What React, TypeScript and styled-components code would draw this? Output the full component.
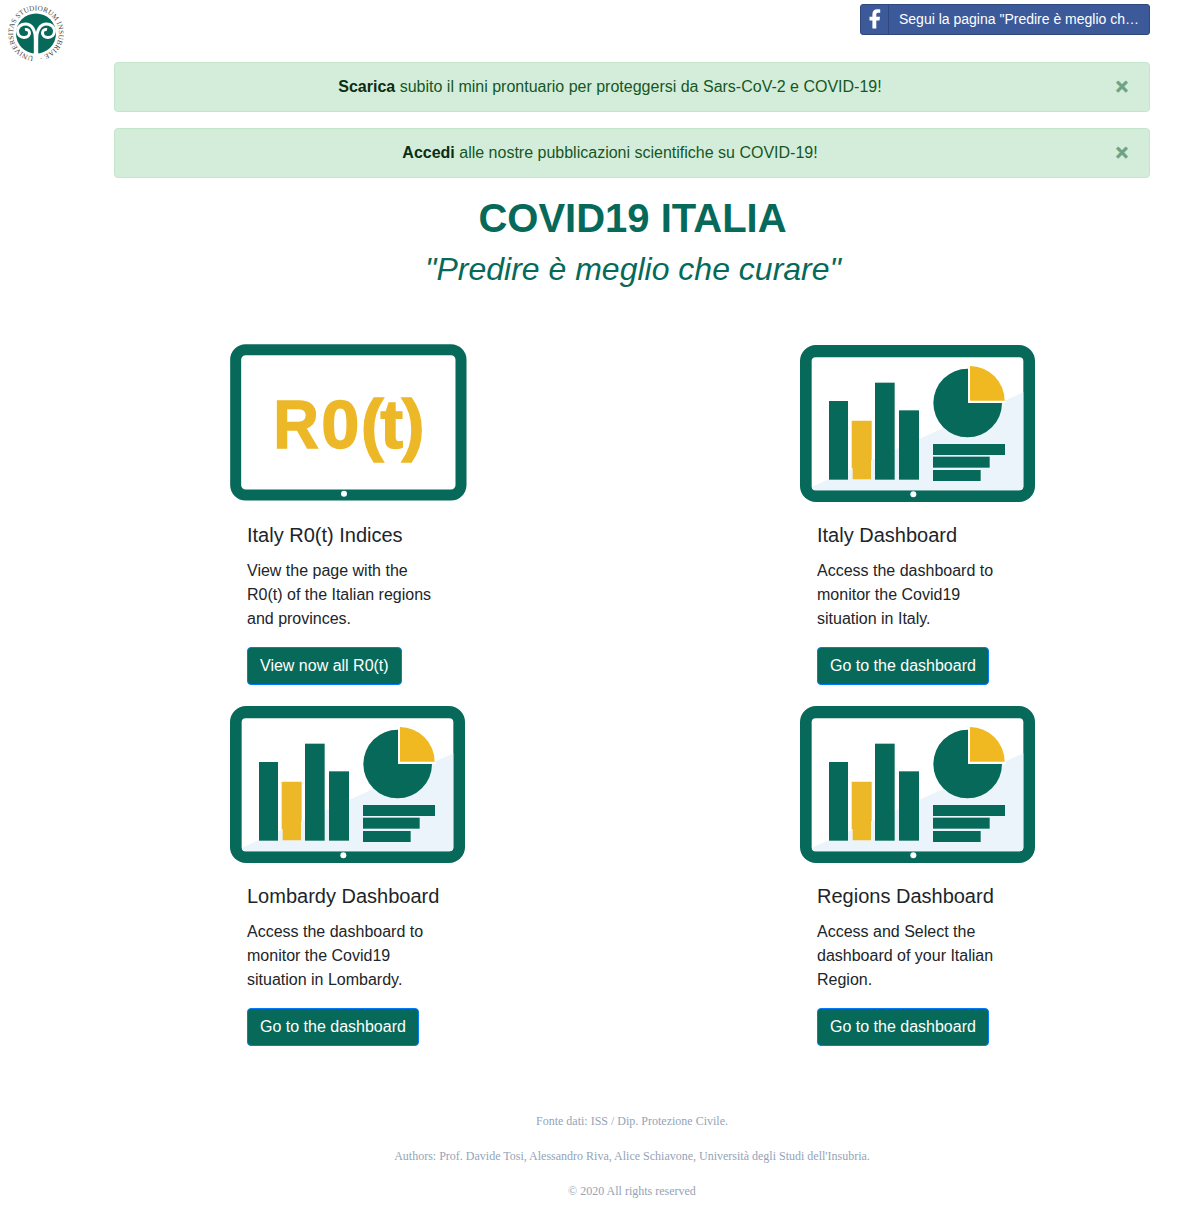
import React from "react";
import styled, { createGlobalStyle } from "styled-components";

const GREEN = "#076959";
const YELLOW = "#edb828";

const GlobalStyle = createGlobalStyle`
  *, *::before, *::after { box-sizing: border-box; }
  body {
    margin: 0;
    background: #fff;
    color: #212529;
    font: 400 16px/1.5 "Liberation Sans", Arial, sans-serif;
  }
`;

const Page = styled.div`
  display: flex;
  min-height: 1214px;
  padding: 4px 29px 0 8px;
`;
const Side = styled.aside`
  flex: 0 0 106px;
`;
const Main = styled.main`
  flex: 1;
`;
const Header = styled.header`
  display: flex;
  justify-content: flex-end;
  height: 58px;
`;
const FollowButton = styled.a`
  display: flex;
  width: 290px;
  height: 31px;
  border: 1px solid #2f477a;
  border-radius: 3px;
  background: #3c5a99;
  color: #fff;
  font-size: 14px;
  line-height: 28px;
`;
const FollowIcon = styled.span`
  display: flex;
  width: 28px;
  border-right: 1px solid #2f477a;
`;
const FollowLabel = styled.span`
  flex: 1;
  padding-left: 10px;
  white-space: nowrap;
`;
const Alert = styled.div`
  display: flex;
  justify-content: space-between;
  height: 50px;
  margin-bottom: 16px;
  padding: 12px 20px;
  border: 1px solid #c3e6cb;
  border-radius: 4px;
  background: #d4edda;
  color: #155724;
`;
const AlertText = styled.p`
  flex: 1;
  margin: 0;
  padding-right: 30px;
  text-align: center;
  b { color: #0b2e13; }
`;
const Close = styled.button`
  width: 14px;
  padding: 0;
  border: 0;
  background: none;
  color: #155724;
  font: 700 22px/22px "Liberation Sans", Arial, sans-serif;
  -webkit-text-stroke: 0.7px #155724;
  opacity: 0.5;
`;
const Title = styled.h1`
  margin: 0 0 8px;
  padding-left: 1px;
  color: ${GREEN};
  font-size: 40px;
  line-height: 48px;
  text-align: center;
`;
const Subtitle = styled.h2`
  margin: 0;
  padding-left: 2px;
  color: ${GREEN};
  font-size: 32px;
  font-weight: 400;
  font-style: italic;
  line-height: 38px;
  text-align: center;
`;
const Cards = styled.section`
  display: grid;
  grid-template-columns: 240px 240px;
  column-gap: 330px;
  margin: 56px 0 0 113px;
`;
const Card = styled.article`
  height: 361px;
`;
const CardBody = styled.div`
  padding: 20px;
`;
const CardTitle = styled.h5`
  margin: 0 0 12px;
  font-size: 20px;
  font-weight: 400;
  line-height: 24px;
`;
const CardText = styled.p`
  margin: 0 0 16px;
`;
const CardButton = styled.a`
  display: inline-block;
  height: 38px;
  padding: 6px 12px;
  border: 1px solid #007bff;
  border-radius: 4px;
  background: ${GREEN};
  color: #fff;
`;
const Picture = styled.svg`
  display: block;
  width: 240px;
  height: 159px;
`;
const Footer = styled.footer`
  margin-top: 46px;
  color: #94a3b8;
  font: 12px/18px "Liberation Serif", "Times New Roman", serif;
  text-align: center;
  p { margin: 0 0 17px; }
`;

const Logo = () => (
  <svg width="56" height="58" viewBox="-28 -29.500 56 58">
    <circle r="20" fill={GREEN} />
    <g fill="none" stroke="#fff" strokeWidth="3">
      <path d="M-0.700 21V6C-0.500-3-4-9.500-10.500-9.500C-15-9.500-18.500-6.500-18.500-2.500C-18.500 1.500-15.500 4-12 4C-8.500 4-6.500 2-6.500-0.500C-6.500-3-8.500-4.500-11-4" />
      <path d="M0.700 21V6C0.500-3 4-9.500 10.500-9.500C15-9.500 18.500-6.500 18.500-2.500C18.500 1.500 15.500 4 12 4C8.500 4 6.500 2 6.500-0.500C6.500-3 8.500-4.500 11-4" />
    </g>
    <defs>
      <path id="seal-ring" d="M-2.500 22.800A23 23 0 1 1 2.500 22.800" />
    </defs>
    <text fill="#444" fontSize="7.2" fontFamily="Liberation Serif, serif">
      <textPath href="#seal-ring" textLength="138">UNIVERSITAS STUDIORUM INSUBRIAE ·</textPath>
    </text>
  </svg>
);

const FacebookMark = () => (
  <svg width="27" height="29" viewBox="0 0 27 29">
    <path
      fill="#fff"
      d="M11.400 23.500V15.500H8.500V11.800H11.400V9.300C11.400 5.800 13.300 4.200 16.300 4.200C17.700 4.200 18.700 4.300 19.200 4.400V7.700H17.200C15.600 7.700 15.300 8.500 15.300 9.600V11.800H19L18.500 15.500H15.300V23.500Z"
    />
  </svg>
);

const IndexPicture = () => (
  <Picture viewBox="21 27 720 477">
    <rect x="47" y="44" width="676" height="436" rx="30" fill="none" stroke={GREEN} strokeWidth="33" />
    <circle cx="372" cy="476" r="9" fill="#fff" />
    <g
      fill={YELLOW}
      stroke={YELLOW}
      strokeWidth="4"
      fontFamily="Liberation Sans, Arial, sans-serif"
      fontWeight="700"
      fontSize="206"
    >
      <text x="160" y="340" textLength="137" lengthAdjust="spacingAndGlyphs">R</text>
      <text x="304 422 481 545" y="339">0(t)</text>
    </g>
  </Picture>
);

const DashboardPicture = () => (
  <Picture viewBox="21 27 720 477">
    <rect x="30" y="30" width="705" height="471" rx="48" fill={GREEN} />
    <rect x="65" y="67" width="635" height="399" rx="12" fill="#fff" />
    <path d="M66 455L700 172V454Q700 466 688 466H77Q66 466 66 455Z" fill="#eaf4fa" />
    <g fill={GREEN}>
      <rect x="117" y="198" width="57" height="236" />
      <rect x="255" y="143" width="59" height="291" />
      <rect x="327" y="226" width="60" height="208" />
      <path d="M534 101A103 103 0 1 0 636 204H534Z" />
      <rect x="429" y="327" width="216" height="33" />
      <rect x="429" y="365" width="170" height="33" />
      <rect x="429" y="405" width="143" height="33" />
    </g>
    <path d="M185 257H245V376H243V433H188V400H185Z" fill={YELLOW} />
    <path d="M537 89V201H647" fill="none" stroke="#fff" strokeWidth="6" />
    <path d="M540 93A104 104 0 0 1 644 197H540Z" fill="#f0b921" />
    <circle cx="370" cy="478" r="9" fill="#fff" />
  </Picture>
);

const cards = [
  { title: "Italy R0(t) Indices", lines: ["View the page with the", "R0(t) of the Italian regions", "and provinces."], action: "View now all R0(t)", index: true },
  { title: "Italy Dashboard", lines: ["Access the dashboard to", "monitor the Covid19", "situation in Italy."], action: "Go to the dashboard" },
  { title: "Lombardy Dashboard", lines: ["Access the dashboard to", "monitor the Covid19", "situation in Lombardy."], action: "Go to the dashboard" },
  { title: "Regions Dashboard", lines: ["Access and Select the", "dashboard of your Italian", "Region."], action: "Go to the dashboard" },
];

export default function App() {
  return (
    <>
      <GlobalStyle />
      <Page>
        <Side>
          <Logo />
        </Side>
        <Main>
          <Header>
            <FollowButton>
              <FollowIcon>
                <FacebookMark />
              </FollowIcon>
              <FollowLabel>Segui la pagina "Predire è meglio ch…</FollowLabel>
            </FollowButton>
          </Header>
          <Alert>
            <AlertText>
              <b>Scarica</b> subito il mini prontuario per proteggersi da Sars-CoV-2 e COVID-19!
            </AlertText>
            <Close>×</Close>
          </Alert>
          <Alert>
            <AlertText>
              <b>Accedi</b> alle nostre pubblicazioni scientifiche su COVID-19!
            </AlertText>
            <Close>×</Close>
          </Alert>
          <Title>COVID19 ITALIA</Title>
          <Subtitle>"Predire è meglio che curare"</Subtitle>
          <Cards>
            {cards.map((card) => (
              <Card key={card.title}>
                {card.index ? <IndexPicture /> : <DashboardPicture />}
                <CardBody>
                  <CardTitle>{card.title}</CardTitle>
                  <CardText>
                    {card.lines.map((line) => (
                      <React.Fragment key={line}>
                        {line}
                        <br />
                      </React.Fragment>
                    ))}
                  </CardText>
                  <CardButton>{card.action}</CardButton>
                </CardBody>
              </Card>
            ))}
          </Cards>
          <Footer>
            <p>Fonte dati: ISS / Dip. Protezione Civile.</p>
            <p>Authors: Prof. Davide Tosi, Alessandro Riva, Alice Schiavone, Università degli Studi dell'Insubria.</p>
            <p>© 2020 All rights reserved</p>
          </Footer>
        </Main>
      </Page>
    </>
  );
}
